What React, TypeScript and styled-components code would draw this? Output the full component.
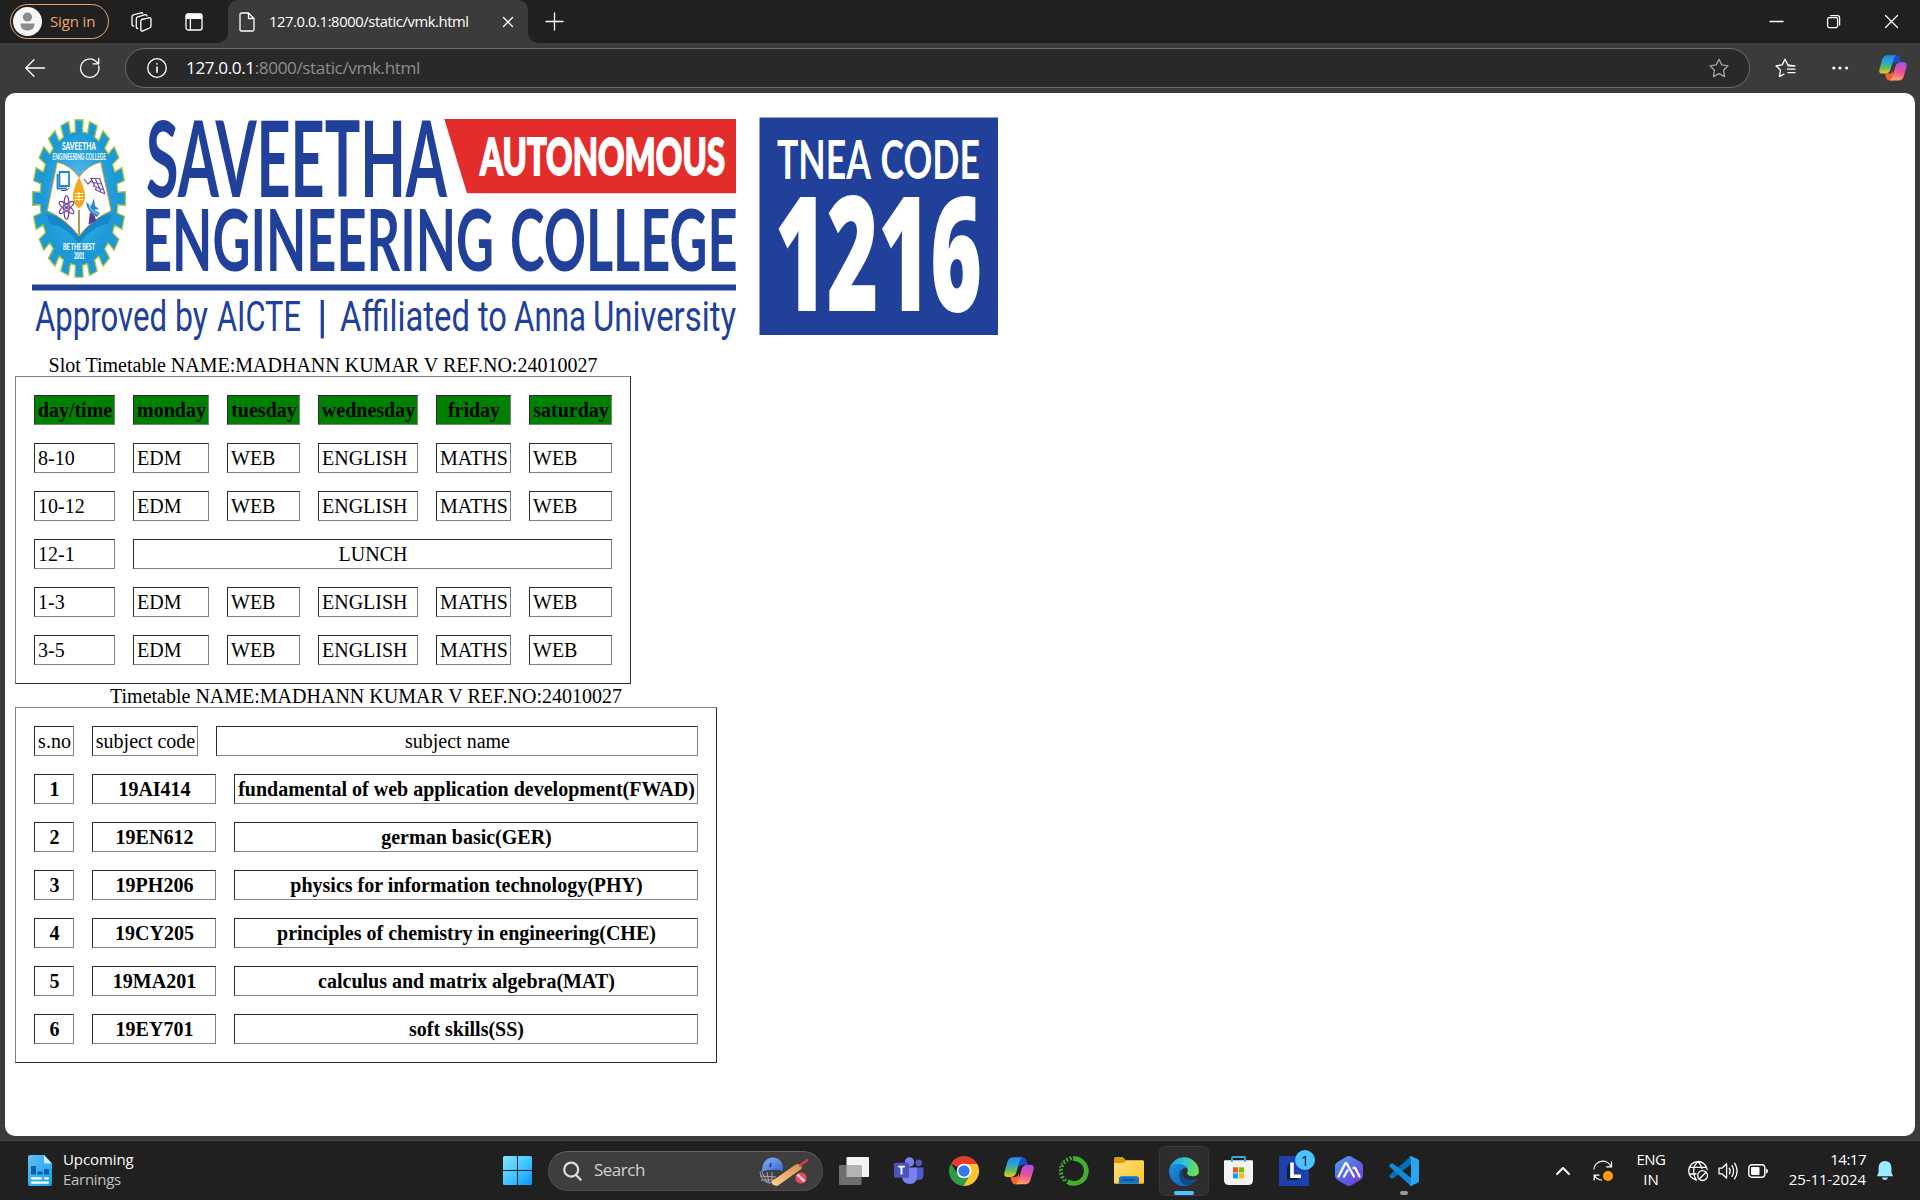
import React from 'react';
import styled, { createGlobalStyle } from 'styled-components';

const UI = '"Open Sans", "Noto Sans", sans-serif';
const SERIF = '"Liberation Serif", "Times New Roman", serif';
const BLUE = '#21409a';

const Global = createGlobalStyle`
  * { box-sizing: border-box; }
  body { margin: 0; background: #3b3b3b; overflow: hidden; }
  svg { display: block; flex: none; overflow: visible; }
`;

const Screen = styled.div`
  width: 1920px;
  height: 1200px;
  display: flex;
  flex-direction: column;
  background: #3b3b3b;
  font-family: ${UI};
  color: #fff;
`;

/* ---------- window chrome ---------- */

const TabStrip = styled.header`
  height: 43px;
  background: #202020;
  display: flex;
  align-items: center;
  padding-left: 10px;
`;

const SignIn = styled.div`
  width: 99px;
  height: 35px;
  border: 1.5px solid #e9a268;
  border-radius: 18px;
  display: flex;
  align-items: center;
  gap: 8px;
  padding-left: 2px;
  color: #f0a56c;
`;

const Gap = styled.div<{ $w: number }>`
  width: ${p => p.$w}px;
  flex: none;
`;

const Grow = styled.div`
  flex: 1;
`;

const Label = styled.span<{ $size: number; $track?: number; $color?: string; $lift?: number }>`
  font-size: ${p => p.$size}px;
  letter-spacing: ${p => p.$track ?? 0}px;
  color: ${p => p.$color ?? 'inherit'};
  line-height: 20px;
  padding-bottom: ${p => p.$lift ?? 0}px;
  white-space: nowrap;
`;

const Tab = styled.div`
  position: relative;
  width: 300px;
  height: 43px;
  background: #3b3b3b;
  border-radius: 10px 10px 0 0;
  display: flex;
  align-items: center;
  padding: 0 15px 0 11px;
  &::before,
  &::after {
    content: '';
    position: absolute;
    bottom: 0;
    width: 10px;
    height: 10px;
  }
  &::before {
    left: -10px;
    background: radial-gradient(circle at 0 0, #202020 9.5px, #3b3b3b 10px);
  }
  &::after {
    right: -10px;
    background: radial-gradient(circle at 100% 0, #202020 9.5px, #3b3b3b 10px);
  }
`;

const Toolbar = styled.div`
  height: 50px;
  display: flex;
  align-items: center;
  padding-left: 25px;
`;

const AddressField = styled.div`
  width: 1625px;
  height: 40px;
  border: 1px solid #6a6a6a;
  border-radius: 20px;
  background: #292929;
  display: flex;
  align-items: center;
  padding: 0 20px 0 21px;
`;

/* ---------- page ---------- */

const Page = styled.main`
  margin: 0 5px;
  height: 1043px;
  padding: 10px;
  background: #fff;
  border-radius: 10px;
  color: #000;
  font-family: ${SERIF};
  font-size: 20px;
  line-height: 23px;
`;

const Caption = styled.div<{ $w: number }>`
  width: ${p => p.$w}px;
  height: 23px;
  padding-top: 1px;
  text-align: center;
  white-space: nowrap;
`;

const Sheet = styled.div<{ $cols: string }>`
  width: max-content;
  display: grid;
  grid-template-columns: ${p => p.$cols};
  grid-auto-rows: 30px;
  gap: 18px;
  padding: 18px;
  border: 1px solid;
  border-color: #808080 #2c2c2c #2c2c2c #808080;
`;

const Cell = styled.div<{ $span?: number; $center?: boolean; $bold?: boolean; $green?: boolean }>`
  grid-column: span ${p => p.$span ?? 1};
  border: 1px solid;
  border-color: #2c2c2c #808080 #808080 #2c2c2c;
  padding: 3px 2px 2px 3px;
  white-space: nowrap;
  display: flex;
  justify-content: ${p => (p.$center ? 'center' : 'flex-start')};
  font-weight: ${p => (p.$bold ? 700 : 400)};
  background: ${p => (p.$green ? '#008000' : 'transparent')};
`;

/* ---------- taskbar ---------- */

const Taskbar = styled.footer`
  margin-top: 4px;
  height: 60px;
  background: #202020;
  border-top: 1px solid #434343;
  display: flex;
  align-items: center;
  padding-left: 28px;
`;

const Stack = styled.div<{ $align?: string; $w?: number }>`
  width: ${p => (p.$w ? `${p.$w}px` : 'auto')};
  display: flex;
  flex-direction: column;
  align-items: ${p => p.$align ?? 'flex-start'};
  padding-bottom: 3px;
`;

const SearchBox = styled.div`
  width: 275px;
  height: 40px;
  border-radius: 20px;
  background: #3e3e3e;
  border: 1px solid #4c4c4c;
  border-top-color: #646464;
  display: flex;
  align-items: center;
  padding: 0 13px 0 14px;
`;

const Apps = styled.div`
  display: flex;
  gap: 5px;
`;

const AppSlot = styled.div<{ $active?: boolean }>`
  position: relative;
  width: 50px;
  height: 50px;
  border-radius: 6px;
  border: 1px solid ${p => (p.$active ? '#393939' : 'transparent')};
  background: ${p => (p.$active ? '#2d2d2d' : 'transparent')};
  display: flex;
  align-items: center;
  justify-content: center;
`;

const Indicator = styled.i<{ $w: number; $color: string }>`
  position: absolute;
  bottom: 0;
  left: calc(50% - ${p => p.$w / 2}px);
  width: ${p => p.$w}px;
  height: 4px;
  border-radius: 2px;
  background: ${p => p.$color};
`;

const Badge = styled.span`
  position: absolute;
  top: 3px;
  right: 3px;
  width: 20px;
  height: 20px;
  border-radius: 50%;
  background: #4cc2ff;
  color: #14202a;
  font-size: 15px;
  line-height: 20px;
  text-align: center;
`;

/* ---------- drawings ---------- */

type IconProps = { w: number; h: number; children: React.ReactNode; color?: string; sw?: number };
const Line = ({ w, h, children, color = '#fff', sw = 1.3 }: IconProps) => (
  <svg width={w} height={h} viewBox={`0 0 ${w} ${h}`} fill="none" stroke={color} strokeWidth={sw} strokeLinecap="round" strokeLinejoin="round">
    {children}
  </svg>
);

const STAR = 'M10 1.2 L12.8 6.9 L19 7.8 L14.5 12.2 L15.6 18.6 L10 15.6 L4.4 18.6 L5.5 12.2 L1 7.8 L7.2 6.9 Z';

const Copilot = ({ id, w }: { id: string; w: number }) => (
  <svg width={w} height={w * 0.92} viewBox="0 0 30 27">
    <defs>
      <linearGradient id={`${id}a`} x1="0" y1="0" x2="0" y2="1">
        <stop offset="0" stopColor="#1b8df0" />
        <stop offset=".4" stopColor="#2fa7c8" />
        <stop offset=".7" stopColor="#6cbb55" />
        <stop offset="1" stopColor="#f2cb1e" />
      </linearGradient>
      <linearGradient id={`${id}b`} x1="0.5" y1="0" x2="0.3" y2="1">
        <stop offset="0" stopColor="#a94ee8" />
        <stop offset=".5" stopColor="#ee5096" />
        <stop offset="1" stopColor="#ffa765" />
      </linearGradient>
    </defs>
    <path d="M15 0 H19 Q21.5 0 22.4 3 L23.6 7.4 H18.5 Q16 7.4 15 11 Z" fill="#1b49cf" />
    <path d="M15 27 H11 Q8.5 27 7.6 24 L6.4 19.6 H11.5 Q14 19.6 15 16 Z" fill="#f2652f" />
    <path d="M9 0 H18.5 Q16.6 .6 15.8 3.4 L12.4 15 Q11 19.6 7 19.6 H3.6 Q-.8 19.6 .5 14.6 L3.4 4.6 Q4.8 0 9 0 Z" fill={`url(#${id}a)`} />
    <path d="M21 27 H11.5 Q13.4 26.4 14.2 23.6 L17.6 12 Q19 7.4 23 7.4 H26.4 Q30.8 7.4 29.5 12.4 L26.6 22.4 Q25.2 27 21 27 Z" fill={`url(#${id}b)`} />
  </svg>
);

const gearPoints = () => {
  const pts: string[] = [];
  const n = 20;
  const at = (deg: number, rx: number, ry: number) => {
    const a = (deg * Math.PI) / 180;
    pts.push(`${(79 + rx * Math.sin(a)).toFixed(2)},${(198.5 - ry * Math.cos(a)).toFixed(2)}`);
  };
  for (let i = 0; i < n; i++) {
    const d = (i * 360) / n;
    at(d - 5.4, 39, 67);
    at(d - 5, 46.6, 79);
    at(d + 5, 46.6, 79);
    at(d + 5.4, 39, 67);
  }
  return pts.join(' ');
};

type WordProps = { x: number; end: number; y: number; size: number; weight?: number; fill?: string; family?: string; bold?: number; children: string };
const Word = ({ x, end, y, size, weight = 700, fill = BLUE, family = 'Lato, sans-serif', bold = 0, children }: WordProps) => (
  <text
    x={x}
    y={y}
    fontSize={size}
    fontWeight={weight}
    fill={fill}
    stroke={bold ? fill : 'none'}
    strokeWidth={bold}
    fontFamily={family}
    textLength={end - x}
    lengthAdjust="spacingAndGlyphs"
  >
    {children}
  </text>
);

const TECH = 'Roboto, sans-serif';

const CollegeBanner = () => (
  <svg width="1000" height="250" viewBox="15 103 1000 250">
    <defs>
      <radialGradient id="disc" cx=".5" cy=".45" r=".55">
        <stop offset="0" stopColor="#7cc7ee" />
        <stop offset=".6" stopColor="#27a4df" />
        <stop offset="1" stopColor="#1c97d5" />
      </radialGradient>
    </defs>
    <polygon points={gearPoints()} fill="#1c99d6" stroke="#a9c83c" strokeWidth="1.3" />
    <ellipse cx="79" cy="198.5" rx="37" ry="63" fill="url(#disc)" />
    <path d="M46 214 Q66 216 79 236 Q92 216 112 214 L108 224 Q92 226 79 244 Q66 226 50 224 Z" fill="#1488c9" />
    <path d="M57.3 162.3 Q70 165 79 177.3 Q88 165 100.7 162.3 L111 210.7 Q93 218 79 236 Q65 218 47.3 210.7 Z" fill="#fff" stroke="#e9a227" strokeWidth="1" />
    <path d="M79 210 V235" stroke="#b19a52" strokeWidth="2" />
    <path d="M79 177 Q86 191 84.8 199 Q83.5 206 79 208 Q74.5 206 73.2 199 Q72 191 79 177 Z" fill="#f2a91c" />
    <path d="M75 193.5 H83 M75 196.5 H83 M75 199.5 H83 M79 192 V201" stroke="#fff3d0" strokeWidth="1" />
    <g fill="none" strokeWidth="1.8">
      <path d="M59.5 172 H69 V186 H59.5 Z M57.5 174 V188.5 H67" stroke="#2389c6" />
      <path d="M61 190.5 H66 L69 188.5" stroke="#6b3c94" strokeWidth="1" />
      <g stroke="#6a3d9a" strokeWidth="1.1">
        <ellipse cx="66.5" cy="207.5" rx="2.7" ry="12" />
        <ellipse cx="66.5" cy="207.5" rx="2.7" ry="9" transform="rotate(52 66.5 207.5)" />
        <ellipse cx="66.5" cy="207.5" rx="2.7" ry="9" transform="rotate(-52 66.5 207.5)" />
      </g>
      <path d="M84 179 L88 184 L92 180 M90 178.5 H99.5 M91 182 L101 184 M93 186 L103 189.5 M95 189.5 L105 194 M91 178 L96.5 190 M95 178 L101 192 M99.5 178 L105 194" stroke="#7650a6" strokeWidth="1.2" />
    </g>
    <circle cx="66.5" cy="207.5" r="1.6" fill="#6a3d9a" />
    <path d="M86 202 Q87 212 97 217 L100 213 L94 210 L99 209 L95 206 L94 198 L91 206 Z" fill="#2c86c7" />
    <path d="M90 212 L95 216 L96 221 L88.5 224.5 Z" fill="#5c3d95" />
    <path d="M89 205 Q91 212 98 214" stroke="#bfe2f5" strokeWidth="1" fill="none" />
    <Word x={62} end={96} y={149.5} size={12} fill="#fff" weight={900}>SAVEETHA</Word>
    <Word x={52.5} end={106} y={160} size={8.5} fill="#fff">ENGINEERING COLLEGE</Word>
    <Word x={63} end={95} y={249.5} size={9} fill="#fff" weight={900}>BE THE BEST</Word>
    <Word x={74} end={84.5} y={258.8} size={9} fill="#fff" weight={900}>2001</Word>

    <Word x={146} end={447} y={196.7} size={105.5}>SAVEETHA</Word>
    <Word x={142} end={494} y={271.3} size={86.5}>ENGINEERING</Word>
    <Word x={510} end={737.5} y={271.3} size={86.5}>COLLEGE</Word>

    <polygon points="444.3,119 736,119 736,193.3 467,193.3" fill="#e32d2c" />
    <Word x={480} end={725} y={174.5} size={51.5} weight={900} fill="#fff" bold={1.8}>AUTONOMOUS</Word>
    <rect x="32" y="284.5" width="704" height="6" fill={BLUE} />

    <Word x={35} end={167} y={330.8} size={43} weight={400} family={TECH}>Approved</Word>
    <Word x={175} end={208} y={330.8} size={43} weight={400} family={TECH}>by</Word>
    <Word x={217} end={301} y={330.8} size={43} weight={400} family={TECH}>AICTE</Word>
    <rect x="320.7" y="300" width="3.2" height="38.5" fill={BLUE} />
    <Word x={340} end={470} y={330.8} size={43} weight={400} family={TECH}>Affiliated</Word>
    <Word x={478} end={507} y={330.8} size={43} weight={400} family={TECH}>to</Word>
    <Word x={514} end={586} y={330.8} size={43} weight={400} family={TECH}>Anna</Word>
    <Word x={593} end={736} y={330.8} size={43} weight={400} family={TECH}>University</Word>

    <rect x="759.5" y="117.5" width="238.5" height="217.5" fill={BLUE} />
    <Word x={777} end={871} y={178.5} size={53.5} fill="#fff">TNEA</Word>
    <Word x={880.5} end={980} y={178.5} size={53.5} fill="#fff">CODE</Word>
    <Word x={775} end={982} y={311.3} size={159} weight={800} fill="#fff" family='"Open Sans", sans-serif'>1216</Word>
  </svg>
);

const Cricket = () => (
  <svg width="50" height="30" viewBox="0 0 50 30">
    <defs>
      <linearGradient id="bat" x1="0" y1="1" x2="1" y2="0">
        <stop offset="0" stopColor="#ffcf94" />
        <stop offset="1" stopColor="#d9914a" />
      </linearGradient>
      <linearGradient id="helm" x1="0" y1="0" x2="1" y2="1">
        <stop offset="0" stopColor="#8ab4ff" />
        <stop offset="1" stopColor="#3767c9" />
      </linearGradient>
    </defs>
    <g fill="none" stroke="#a3a8b4" strokeWidth="1">
      <path d="M1 16 Q2 25 10 27 L16 26 M3 16 L8 26 M1 20 L17 21 M2 24 L16 24 M8 16 L10 27 M13 16 L13 26" />
    </g>
    <path d="M3 14 Q4 2 14 1.5 Q23 2 24 11 L24 15 Q14 12 1 16 Z" fill="url(#helm)" />
    <path d="M12 7 L11 11" stroke="#1d3470" strokeWidth="1.6" />
    <path d="M13 25 L36 9 Q40 7 42 9 Q44 12 41 14 L19 29.5 Q16 30.5 13 28 Z" fill="url(#bat)" />
    <path d="M41 9.5 L48.5 4" stroke="#e2374b" strokeWidth="2.2" strokeLinecap="round" />
    <circle cx="42" cy="22" r="5.6" fill="#f0485e" />
    <path d="M38.4 18.6 L45.6 25.4" stroke="#ffd9e2" strokeWidth="2.6" />
  </svg>
);

const WinLogo = () => (
  <svg width="29" height="29" viewBox="0 0 29 29">
    <defs>
      <linearGradient id="win" x1="0" y1="0" x2="29" y2="29" gradientUnits="userSpaceOnUse">
        <stop offset="0" stopColor="#8ae2ff" />
        <stop offset=".5" stopColor="#44c8ff" />
        <stop offset="1" stopColor="#0a93fb" />
      </linearGradient>
    </defs>
    <path d="M1.5 0 H14 V14 H0 V1.5 Q0 0 1.5 0 Z M15 0 H27.5 Q29 0 29 1.5 V14 H15 Z M0 15 H14 V29 H1.5 Q0 29 0 27.5 Z M15 15 H29 V27.5 Q29 29 27.5 29 H15 Z" fill="url(#win)" />
  </svg>
);

const EarningsDoc = () => (
  <svg width="24" height="31" viewBox="0 0 24 31">
    <defs>
      <linearGradient id="doc" x1="0" y1="0" x2="1" y2="1">
        <stop offset="0" stopColor="#5fbdf5" />
        <stop offset="1" stopColor="#16a3ec" />
      </linearGradient>
    </defs>
    <path d="M2 0 H16 L24 8.5 V29 Q24 31 22 31 H2 Q0 31 0 29 V2 Q0 0 2 0 Z" fill="url(#doc)" />
    <path d="M16 0 L24 8.5 H17.5 Q16 8.5 16 7 Z" fill="#c9ecff" />
    <path d="M3 11 H8 V19.5 H3 Z M9.5 16.5 H14.5 V19.5 H9.5 Z M16 14 H21 V19.5 H16 Z" fill="#0f5fae" />
    <path d="M4 23.3 H13 M17 23.3 H20 M4 27.6 H20" stroke="#fff" strokeWidth="2.2" strokeLinecap="round" />
  </svg>
);

const TaskView = () => (
  <svg width="30" height="28" viewBox="0 0 30 28">
    <rect x="7.5" y="0" width="22.5" height="20" rx="1" fill="#f3f3f3" />
    <rect x="0" y="8" width="22.5" height="20" rx="1" fill="#6e6e6e" />
    <rect x="7.5" y="8" width="15" height="12" fill="#b3b3b3" />
  </svg>
);

const Teams = () => (
  <svg width="30" height="27" viewBox="0 0 30 27">
    <circle cx="15.5" cy="5" r="4.7" fill="#7b83eb" />
    <circle cx="24.8" cy="5.8" r="3.2" fill="#5059c9" />
    <path d="M20 10.5 H28.5 Q29.5 10.5 29.5 11.5 V18 Q29.5 23 24.5 23 Q21 23 20 20 Z" fill="#5059c9" />
    <path d="M8 10.5 H22 Q23 10.5 23 11.5 V19.5 Q23 27 15.8 27 Q8.5 27 8 19.5 Z" fill="#7b83eb" />
    <rect x="0" y="5.8" width="15" height="15" rx="1.5" fill="#4b53bc" />
    <path d="M4.2 9.6 H10.8 M7.5 9.6 V17.4" stroke="#fff" strokeWidth="1.9" />
  </svg>
);

const ChromeLogo = () => (
  <svg width="30" height="30" viewBox="0 0 30 30">
    <path d="M15 15 L2 7.5 A15 15 0 0 1 28 7.5 L28 8 H15 Z" fill="#e33b2e" />
    <path d="M2 7.5 A15 15 0 0 0 14.4 30 L21.1 18.5 L15 15 L8.9 18.5 Z" fill="#2a9d46" />
    <path d="M28 7.5 A15 15 0 0 1 14.4 30 L21.1 18.5 L21 11.5 L15 8 H28.2 Z" fill="#fcc52b" />
    <circle cx="15" cy="15" r="7.3" fill="#fff" />
    <circle cx="15" cy="15" r="5.7" fill="#2f79e8" />
  </svg>
);

const Anaconda = () => (
  <svg width="30" height="30" viewBox="0 0 30 30" fill="none" stroke="#43b02a">
    <path d="M14 2.6 A12.4 12.4 0 1 1 8.5 25.6" strokeWidth="4.8" />
    <path d="M13 2.8 A12.3 12.3 0 0 0 8 25.2" strokeWidth="2.6" strokeDasharray="1.8 2" />
    <path d="M12 1 A14.2 14.2 0 0 0 6 26" strokeWidth="1.6" strokeDasharray="2 1.6" />
  </svg>
);

const Folder = () => (
  <svg width="30" height="27" viewBox="0 0 30 27">
    <defs>
      <linearGradient id="fold" x1="0" y1="0" x2="1" y2="1">
        <stop offset="0" stopColor="#ffe07d" />
        <stop offset="1" stopColor="#fcc42c" />
      </linearGradient>
    </defs>
    <path d="M0 1.5 Q0 0 1.5 0 H8.5 L12 3.2 H28.5 Q30 3.2 30 5 V10 H0 Z" fill="#dd9a08" />
    <path d="M0 6 H9.5 L12.5 3.6 H28.5 Q30 3.6 30 5 V25.5 Q30 26.7 28.8 26.7 H1.2 Q0 26.7 0 25.5 Z" fill="url(#fold)" />
    <path d="M5 26.7 V22 Q5 19.3 7.7 19.3 H22.3 Q25 19.3 25 22 V26.7 Z" fill="#1272c8" />
    <path d="M9 23 H21" stroke="#0a4d92" strokeWidth="1.3" />
  </svg>
);

const Edge = () => (
  <svg width="30" height="30" viewBox="0 0 30 30">
    <defs>
      <linearGradient id="e1" x1="0" y1="0.2" x2="1" y2="0.4">
        <stop offset="0" stopColor="#1f9de0" />
        <stop offset=".5" stopColor="#30c4d0" />
        <stop offset="1" stopColor="#6be04f" />
      </linearGradient>
      <linearGradient id="e2" x1="0" y1="0" x2="1" y2="1">
        <stop offset="0" stopColor="#1a90de" />
        <stop offset="1" stopColor="#0d5cae" />
      </linearGradient>
    </defs>
    <path d="M.3 13.5 A15 15 0 0 1 30 15 Q30 19.8 25 20.2 Q20 20.5 18.3 18 Q17.6 17 18.4 16 Q20 13.5 16.5 10.5 Q9 6.5 .3 13.5 Z" fill="url(#e1)" />
    <path d="M.2 13.3 Q3 7.6 10 7.9 Q16.4 8.3 18.8 12.2 Q12.5 10.6 11.4 17 Q11 24.5 19.5 25.5 Q24.3 25.8 27.8 23 A15 15 0 0 1 .2 13.3 Z" fill="url(#e2)" />
    <path d="M10.5 16 Q8.5 24 15.5 28.8 Q23 30 27.8 23.4 Q28 22 26.6 22.9 Q19 26 14.3 20.5 Q12 17 14 13 Q11.5 13.4 10.5 16 Z" fill="#114a8b" />
  </svg>
);

const Store = () => (
  <svg width="30" height="29" viewBox="0 0 30 29">
    <path d="M0 5 Q0 4.2 1 4.2 H28 Q29 4.2 29 5 V24 Q29 29 24 29 H5 Q0 29 0 24 Z" fill="#f3f3f3" />
    <path d="M8 6 V2 Q8 1 9 1 H20 Q21 1 21 2 V6" fill="none" stroke="#2cb1e6" strokeWidth="1.8" />
    <rect x="9" y="11.3" width="5.1" height="5.1" fill="#f25022" />
    <rect x="15" y="11.3" width="5.1" height="5.1" fill="#7fba00" />
    <rect x="9" y="17.3" width="5.1" height="5.1" fill="#00a4ef" />
    <rect x="15" y="17.3" width="5.1" height="5.1" fill="#ffb900" />
  </svg>
);

const LApp = () => (
  <svg width="30" height="30" viewBox="0 0 30 30">
    <rect width="30" height="30" fill="#1e3fae" />
    <path d="M8 24 L11 21 V6 L8 12 Z M8 24 H18 L22 21 H11 Z" fill="#0c2233" />
    <path d="M13 6.5 V20.2 H22" fill="none" stroke="#fff" strokeWidth="3.6" />
  </svg>
);

const HexApp = () => (
  <svg width="28" height="30" viewBox="0 0 28 30">
    <defs>
      <linearGradient id="hex" x1="0" y1="0" x2=".7" y2="1">
        <stop offset="0" stopColor="#55a8e8" />
        <stop offset=".5" stopColor="#5570e8" />
        <stop offset="1" stopColor="#6d3fe0" />
      </linearGradient>
    </defs>
    <path d="M11.5 .8 Q14 -.6 16.5 .8 L25.5 6 Q28 7.5 28 10 V20 Q28 22.5 25.5 24 L16.5 29.2 Q14 30.6 11.5 29.2 L2.5 24 Q0 22.5 0 20 V10 Q0 7.5 2.5 6 Z" fill="url(#hex)" />
    <path d="M3.5 20.5 L10 8 Q11 6.5 12 8 L19 20.5 M9 20.5 L12.5 14.5 M18.5 12 Q19.5 11 20.5 12.5 L24.5 20.5" fill="none" stroke="#fff" strokeWidth="2.3" strokeLinecap="round" strokeLinejoin="round" />
  </svg>
);

const VSCode = () => (
  <svg width="30" height="30" viewBox="0 0 30 30">
    <path d="M22 0 L22 8.2 L4 22.5 Q3 23.2 2.2 22.5 L.5 21 Q-.3 20 .5 19.2 Z" fill="#0072b8" />
    <path d="M22 30 L22 21.8 L4 7.5 Q3 6.8 2.2 7.5 L.5 9 Q-.3 10 .5 10.8 Z" fill="#0f8bd8" />
    <path d="M22 0 L28.8 3.2 Q30 3.8 30 5 V25 Q30 26.2 28.8 26.8 L22 30 Q21 30 20.5 29 Q22 29 22 27 V3 Q22 1 20.5 1 Q21 0 22 0 Z" fill="#2aa5f3" />
  </svg>
);

/* ---------- data ---------- */

const DAYS = ['day/time', 'monday', 'tuesday', 'wednesday', 'friday', 'saturday'];
const SLOTS = ['8-10', '10-12', '12-1', '1-3', '3-5'];
const LESSONS = ['EDM', 'WEB', 'ENGLISH', 'MATHS', 'WEB'];
const SUBJECTS = [
  ['19AI414', 'fundamental of web application development(FWAD)'],
  ['19EN612', 'german basic(GER)'],
  ['19PH206', 'physics for information technology(PHY)'],
  ['19CY205', 'principles of chemistry in engineering(CHE)'],
  ['19MA201', 'calculus and matrix algebra(MAT)'],
  ['19EY701', 'soft skills(SS)'],
];

export default function App() {
  return (
    <Screen>
      <Global />
      <TabStrip>
        <SignIn>
          <svg width="29" height="29" viewBox="0 0 29 29">
            <circle cx="14.5" cy="14.5" r="14.5" fill="#f7f7f7" />
            <circle cx="14.5" cy="10" r="4.6" fill="#8b8b8b" />
            <path d="M7.5 16.5 H21.5 Q21.5 23.5 14.5 23.5 Q7.5 23.5 7.5 16.5 Z" fill="#8b8b8b" />
          </svg>
          <Label $size={15} $track={-0.15} $lift={2}>Sign in</Label>
        </SignIn>
        <Gap $w={22} />
        <Line w={21} h={20}>
          <path d="M10.5 7.5 L18 5.8 Q20 5.5 20 7.3 V14 Q20 15.5 18.6 16 L12 18.8 Q9.8 19.5 9.8 17.5 V9.5 Q9.8 8 11.2 7.4 Z" />
          <path d="M6.8 16.5 Q5.3 16.5 5.3 14.8 V7 Q5.3 5.4 6.8 4.9 L14.5 2.7 Q15.8 2.5 16 3.8" />
          <path d="M2.6 14 Q1 14 1 12.2 V4.8 Q1 3.3 2.4 2.8 L10 .8 Q11.3 .5 11.7 1.5" />
        </Line>
        <Gap $w={33} />
        <Line w={18} h={18}>
          <rect x="1" y="1" width="16" height="16" rx="2" />
          <path d="M1.5 1.5 H16.5 V5.3 H1.5 Z" fill="#fff" />
          <path d="M5.4 5 V17" />
        </Line>
        <Gap $w={25} />
        <Tab>
          <Line w={16} h={20}>
            <path d="M3 1 H9.5 L15 6.5 V17.5 Q15 19 13.5 19 H2.5 Q1 19 1 17.5 V2.5 Q1 1 2.5 1 Z M9.5 1 V6.5 H15" />
          </Line>
          <Gap $w={14} />
          <Label $size={14.8} $track={-0.42} $lift={2}>127.0.0.1:8000/static/vmk.html</Label>
          <Grow />
          <Line w={10} h={10}><path d="M.5 .5 L9.5 9.5 M9.5 .5 L.5 9.5" /></Line>
        </Tab>
        <Gap $w={18} />
        <Line w={17} h={17}><path d="M8.5 0 V17 M0 8.5 H17" /></Line>
        <Grow />
        <Line w={13} h={13}><path d="M0 6.5 H13" /></Line>
        <Gap $w={44} />
        <Line w={13} h={13}>
          <rect x=".6" y="2.6" width="10" height="10" rx="1.5" />
          <path d="M3.5 .6 H10.5 Q12.6 .6 12.6 2.7 V10" />
        </Line>
        <Gap $w={45} />
        <Line w={13} h={13}><path d="M.5 .5 L12.5 12.5 M12.5 .5 L.5 12.5" /></Line>
        <Gap $w={22} />
      </TabStrip>

      <Toolbar>
        <Line w={20} h={18}><path d="M19.5 9 H1 M9 .8 L.8 9 L9 17.2" /></Line>
        <Gap $w={35} />
        <Line w={20} h={20}><path d="M18.7 8 A9.2 9.2 0 1 1 15.5 3 L18.5 5.5 M18.7 .5 V5.8 H13" /></Line>
        <Gap $w={25} />
        <AddressField>
          <Line w={20} h={20}><circle cx="10" cy="10" r="9.3" /><path d="M10 9 V14.3 M10 5.8 V6" strokeWidth="1.6" /></Line>
          <Gap $w={19} />
          <Label $size={17.2} $track={-0.42} $lift={1}>127.0.0.1</Label>
          <Label $size={17.2} $track={-0.42} $lift={1} $color="#8d8d8d">:8000/static/vmk.html</Label>
          <Grow />
          <Line w={20} h={20} color="#a2a2a2"><path d={STAR} /></Line>
        </AddressField>
        <Gap $w={25} />
        <Line w={20} h={20}>
          <path d="M19 7.8 L12.8 6.9 L10 1.2 L7.2 6.9 L1 7.8 L5.5 12.2 L4.4 18.6 L9 16.2" />
          <path d="M13 7.8 H20 M12.5 11.2 H20 M13 14.6 H20" />
        </Line>
        <Gap $w={37} />
        <svg width="16" height="4" viewBox="0 0 16 4" fill="#fff"><circle cx="1.8" cy="2" r="1.6" /><circle cx="8" cy="2" r="1.6" /><circle cx="14.6" cy="2" r="1.6" /></svg>
        <Gap $w={31} />
        <Copilot id="ct" w={28} />
      </Toolbar>

      <Page>
        <CollegeBanner />
        <Caption $w={616}>Slot Timetable NAME:MADHANN KUMAR V REF.NO:24010027</Caption>
        <Sheet $cols="81px 76px 73px 100px 75px 83px">
          {DAYS.map(d => <Cell key={d} $center $bold $green>{d}</Cell>)}
          {SLOTS.map(s => (
            <React.Fragment key={s}>
              <Cell>{s}</Cell>
              {s === '12-1'
                ? <Cell $span={5} $center>LUNCH</Cell>
                : LESSONS.map((l, i) => <Cell key={i}>{l}</Cell>)}
            </React.Fragment>
          ))}
        </Sheet>
        <Caption $w={702}>Timetable NAME:MADHANN KUMAR V REF.NO:24010027</Caption>
        <Sheet $cols="40px 106px 0 464px">
          <Cell $center>s.no</Cell>
          <Cell $center>subject code</Cell>
          <Cell $center $span={2}>subject name</Cell>
          {SUBJECTS.map(([code, name], i) => (
            <React.Fragment key={code}>
              <Cell $center $bold>{i + 1}</Cell>
              <Cell $center $bold $span={2}>{code}</Cell>
              <Cell $center $bold>{name}</Cell>
            </React.Fragment>
          ))}
        </Sheet>
      </Page>

      <Taskbar>
        <EarningsDoc />
        <Gap $w={11} />
        <Stack $w={440}>
          <Label $size={15} $track={-0.1}>Upcoming</Label>
          <Label $size={15} $track={-0.3} $color="#c0c0c0">Earnings</Label>
        </Stack>
        <WinLogo />
        <Gap $w={16} />
        <SearchBox>
          <Line w={19} h={20} color="#dcdcdc" sw={2.2}><circle cx="8.2" cy="8.6" r="7" /><path d="M13 14 L17.6 18.6" /></Line>
          <Gap $w={12} />
          <Label $size={17} $track={-0.5} $lift={1} $color="#d0d0d0">Search</Label>
          <Grow />
          <Cricket />
        </SearchBox>
        <Gap $w={6} />
        <Apps>
          <AppSlot><TaskView /></AppSlot>
          <AppSlot><Teams /></AppSlot>
          <AppSlot><ChromeLogo /></AppSlot>
          <AppSlot><Copilot id="cb" w={30} /></AppSlot>
          <AppSlot><Anaconda /></AppSlot>
          <AppSlot><Folder /></AppSlot>
          <AppSlot $active><Edge /><Indicator $w={20} $color="#4cc2ff" /></AppSlot>
          <AppSlot><Store /></AppSlot>
          <AppSlot><LApp /><Badge>1</Badge></AppSlot>
          <AppSlot><HexApp /></AppSlot>
          <AppSlot><VSCode /><Indicator $w={8} $color="#9a9a9a" /></AppSlot>
        </Apps>
        <Grow />
        <Line w={14} h={8} sw={2}><path d="M1 7 L7 1 L13 7" /></Line>
        <Gap $w={23} />
        <svg width="20" height="20" viewBox="0 0 20 20" fill="none" stroke="#fff" strokeWidth="1.2">
          <path d="M.8 8.5 A9 9 0 0 1 18 5.5 M18.5 .5 V5.8 H13.2 M1.2 19.5 V14.2 H6.5 M1.5 14.5 A9 9 0 0 0 9 19" />
          <circle cx="15" cy="15" r="5" fill="#ff9c0a" stroke="none" />
        </svg>
        <Gap $w={18} />
        <Stack $w={40} $align="center">
          <Label $size={15} $track={-0.5}>ENG</Label>
          <Label $size={15}>IN</Label>
        </Stack>
        <Gap $w={17} />
        <Line w={20} h={20}>
          <path d="M8.5 19 A9.3 9.3 0 1 1 19.2 8.5 M1.5 6.3 H18.5 M1.2 13 H8 M8.2 18.8 Q5.6 15 5.6 10 Q5.6 4 10 .8 Q13.3 3.5 14 7.6" />
          <circle cx="14.6" cy="14.6" r="4.9" />
          <path d="M11.2 18 L18 11.2" />
        </Line>
        <Gap $w={10} />
        <Line w={20} h={18}>
          <path d="M1 6.2 H4 L8.6 1.8 V16.2 L4 11.8 H1 Z M11.3 6.2 Q13 9 11.3 11.8 M14 3.6 Q17.2 9 14 14.4 M16.6 1.2 Q21.6 9 16.6 16.8" />
        </Line>
        <Gap $w={10} />
        <svg width="20" height="14" viewBox="0 0 20 14">
          <rect x=".8" y=".8" width="16" height="12.4" rx="3" fill="none" stroke="#fff" strokeWidth="1.4" />
          <rect x="3" y="3" width="8.5" height="8" rx="1" fill="#fff" />
          <path d="M18 4.5 Q20 5 20 7 Q20 9 18 9.5 Z" fill="#fff" />
        </svg>
        <Gap $w={18} />
        <Stack $w={80} $align="flex-end">
          <Label $size={15} $track={-0.5}>14:17</Label>
          <Label $size={15} $track={-0.1}>25-11-2024</Label>
        </Stack>
        <Gap $w={11} />
        <svg width="16" height="19" viewBox="0 0 16 19" fill="#99ebff">
          <path d="M8 0 Q14.2 .3 14.4 6.5 V11 L16 15.3 H0 L1.6 11 V6.5 Q1.8 .3 8 0 Z M5 16.4 H11 Q10.5 19 8 19 Q5.5 19 5 16.4 Z" />
        </svg>
        <Gap $w={27} />
      </Taskbar>
    </Screen>
  );
}
